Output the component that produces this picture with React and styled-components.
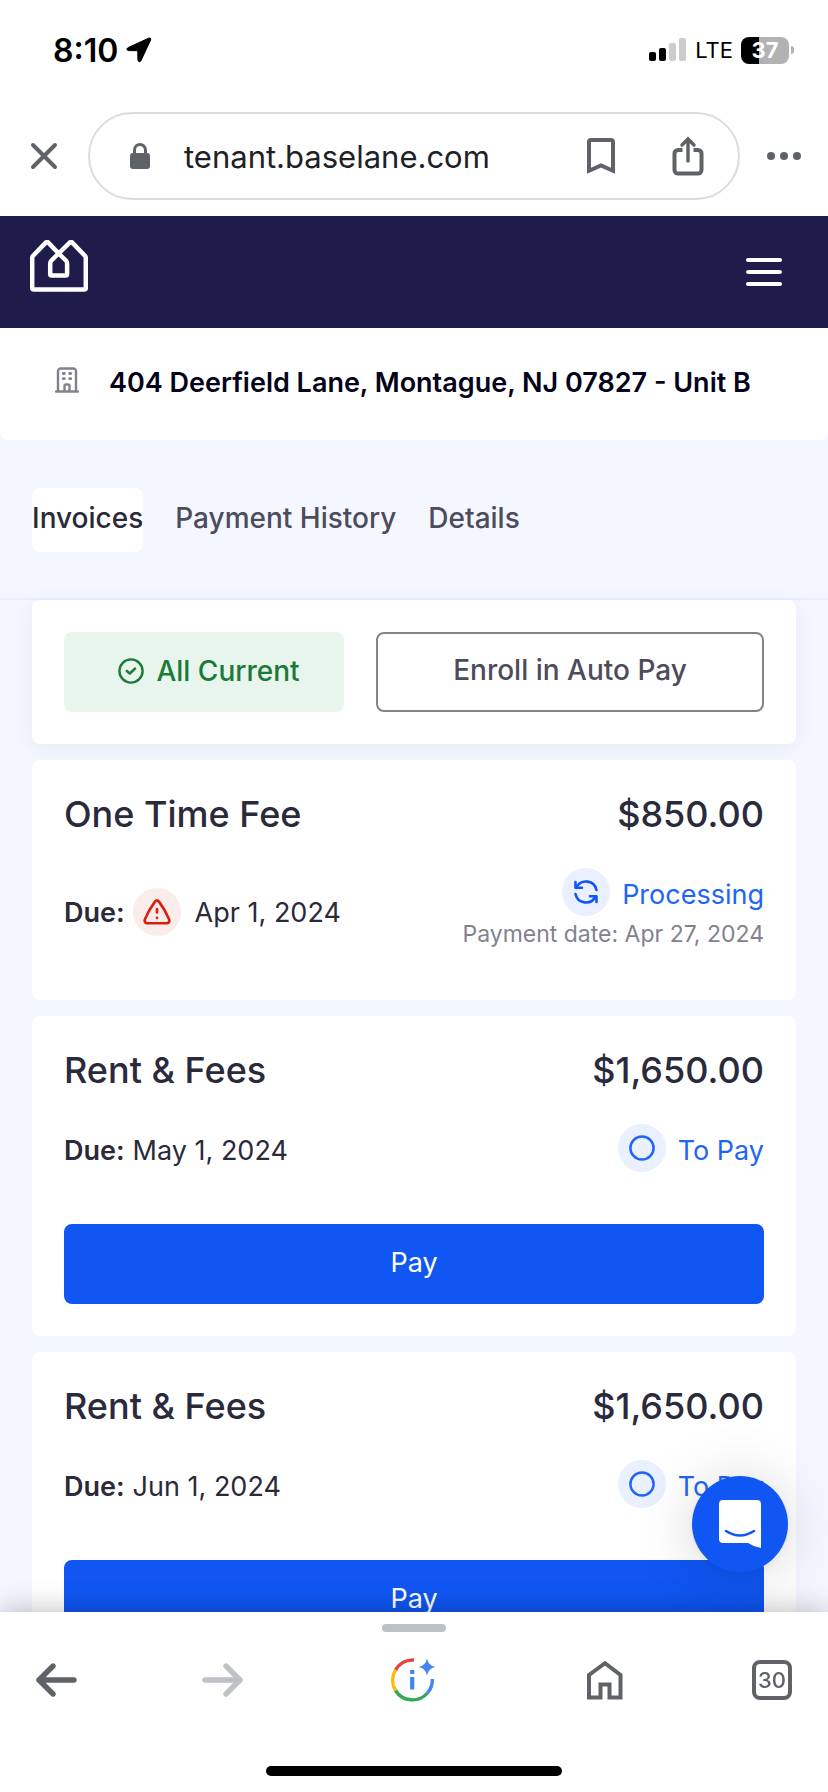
import styled, { createGlobalStyle } from "styled-components";

const invoices = [
    { id: 1, title: "One Time Fee", amount: "$850.00", due: "Apr 1, 2024", late: true, status: "Processing", paymentDate: "Apr 27, 2024" },
    { id: 2, title: "Rent & Fees", amount: "$1,650.00", due: "May 1, 2024", status: "To Pay" },
    { id: 3, title: "Rent & Fees", amount: "$1,650.00", due: "Jun 1, 2024", status: "To Pay" },
];

const tabs = ["Invoices", "Payment History", "Details"];

export default function App() {
    return (
        <>
            <GlobalStyle />
            <Phone>
                <StatusBar />
                <AddressBar />
                <Viewport>
                    <Page>
                        <SiteHeader>
                            <a href="#home" aria-label="Baselane home"><LogoIcon /></a>
                            <IconButton aria-label="Open menu"><MenuIcon /></IconButton>
                        </SiteHeader>
                        <Property>
                            <BuildingIcon />
                            <h1>404 Deerfield Lane, Montague, NJ 07827 - Unit B</h1>
                        </Property>
                        <Tabs>
                            {tabs.map((t) => <Tab key={t} $active={t === "Invoices"}>{t}</Tab>)}
                        </Tabs>
                        <Cards>
                            <Summary>
                                <Current><CheckIcon />All Current</Current>
                                <Enroll>Enroll in Auto Pay</Enroll>
                            </Summary>
                            {invoices.map((i) => <Invoice key={i.id} {...i} />)}
                        </Cards>
                    </Page>
                    <Chat aria-label="Open chat"><ChatIcon /></Chat>
                </Viewport>
                <BottomBar />
            </Phone>
        </>
    )
}

function StatusBar() {
    return (
        <Status>
            <Clock>8:10 <LocationIcon /></Clock>
            <Signal>
                <BarsIcon />
                LTE
                <Battery>
                    <Level>37</Level>
                    <Nub />
                </Battery>
            </Signal>
        </Status>
    )
}

function AddressBar() {
    return (
        <Toolbar>
            <SideButton aria-label="Close"><CloseIcon /></SideButton>
            <Pill>
                <LockIcon />
                <Url type="text" aria-label="Address" defaultValue="tenant.baselane.com" />
                <IconButton aria-label="Bookmark"><BookmarkIcon /></IconButton>
                <IconButton aria-label="Share"><ShareIcon /></IconButton>
            </Pill>
            <SideButton aria-label="More"><DotsIcon /></SideButton>
        </Toolbar>
    )
}

function Invoice({ title, amount, due, late, status, paymentDate }) {
    return (
        <Card>
            <CardTop>
                <h2>{title}</h2>
                <strong>{amount}</strong>
            </CardTop>
            <CardBody>
                <Info>
                    <Due>
                        <b>Due:</b>
                        {late && <Round color="#fbecec"><WarningIcon /></Round>}
                        <DueDate $late={late}>{due}</DueDate>
                    </Due>
                    <State>
                        <StateRow>
                            <Round color="#eaf0ff">{status === "Processing" ? <SyncIcon /> : <CircleIcon />}</Round>
                            <span>{status}</span>
                        </StateRow>
                        {paymentDate && <small>Payment date: {paymentDate}</small>}
                    </State>
                </Info>
            </CardBody>
            {status === "To Pay" && <Pay>Pay</Pay>}
        </Card>
    )
}

function BottomBar() {
    return (
        <Bottom>
            <Handle />
            <Nav>
                <NavButton aria-label="Back"><ArrowIcon color="#5f6368" /></NavButton>
                <NavButton aria-label="Forward" disabled><ArrowIcon color="#bdc1c6" flip /></NavButton>
                <NavButton aria-label="Page info" $wide><PageInfoIcon /></NavButton>
                <NavButton aria-label="Home"><HomeIcon /></NavButton>
                <NavButton aria-label="Open tabs"><TabCount>30</TabCount></NavButton>
            </Nav>
            <HomeIndicator />
        </Bottom>
    )
}

const LocationIcon = () => (
    <svg width="26" height="26" viewBox="0 0 26 26">
        <path d="M22.6 1.2 L2.2 10.6 C.3 11.5 .8 13.6 2.8 13.6 L11.8 13.7 L11.9 22.8 C11.9 25 14.2 25.4 15.1 23.4 L24.6 3 C25.3 1.5 24 .5 22.6 1.2Z" fill="#000" stroke="#000" strokeWidth="1" />
    </svg>
)

const BarsIcon = () => (
    <svg width="38" height="24" viewBox="0 0 38 24">
        <rect x="0" y="14" width="7" height="9" rx="2" />
        <rect x="10" y="10" width="7" height="13" rx="2" />
        <rect x="20" y="5" width="7" height="18" rx="2" fill="#ccc" />
        <rect x="30" y="0" width="7" height="23" rx="2" fill="#ccc" />
    </svg>
)

const CloseIcon = () => (
    <svg width="28" height="28" viewBox="0 0 28 28" stroke="#5f6368" strokeWidth="4" strokeLinecap="round">
        <path d="M3 3 L25 25 M25 3 L3 25" />
    </svg>
)

const LockIcon = () => (
    <svg width="20" height="26" viewBox="0 0 20 26">
        <rect y="10" width="20" height="16" rx="3" fill="#5f6368" />
        <path d="M4.5 12 V7 a5.5 5.5 0 0 1 11 0 V12" fill="none" stroke="#5f6368" strokeWidth="3" />
    </svg>
)

const BookmarkIcon = () => (
    <svg width="28" height="38" viewBox="0 0 28 38" fill="none" stroke="#5f6368" strokeWidth="4">
        <path d="M2 33.8 V5 a2 2 0 0 1 2-2 H24 a2 2 0 0 1 2 2 V33.8 L14 28.5Z" />
    </svg>
)

const ShareIcon = () => (
    <svg width="32" height="40" viewBox="0 0 32 40" fill="none" stroke="#5f6368" strokeWidth="4">
        <path d="M10.5 14 H6 a3.5 3.5 0 0 0-3.5 3.5 V34 A3.5 3.5 0 0 0 6 37.5 H26 A3.5 3.5 0 0 0 29.5 34 V17.5 A3.5 3.5 0 0 0 26 14 H21.5" />
        <path d="M16 25 V4 M10 9 L16 3 L22 9" strokeWidth="3.5" strokeLinecap="round" />
    </svg>
)

const DotsIcon = () => (
    <svg width="34" height="8" viewBox="0 0 34 8" fill="#5f6368">
        <circle cx="4" cy="4" r="4" />
        <circle cx="17" cy="4" r="4" />
        <circle cx="30" cy="4" r="4" />
    </svg>
)

const LogoIcon = () => (
    <svg width="58" height="52" viewBox="0 0 58 52" fill="none" stroke="#fff" strokeWidth="4.5" strokeLinejoin="round">
        <path d="M28.7 13.5 L18.3 2.6 Q17 1.5 15.7 2.6 L3.6 15.2 Q2.2 16.5 2.2 18 V48 Q2.2 49.6 3.8 49.6 H54.2 Q55.8 49.6 55.8 48 V18 Q55.8 16.5 54.4 15.2 L42.3 2.6 Q41 1.5 39.7 2.6 L21.4 20.5 Q20.2 21.7 20.2 23.5 V34 Q20.2 35.6 21.8 35.6 H35.5 Q37.1 35.6 37.1 34 V23.5 Q37.1 21.7 35.9 20.5 L28.7 13.5" />
    </svg>
)

const MenuIcon = () => (
    <svg width="36" height="28" viewBox="0 0 36 28" stroke="#fff" strokeWidth="4" strokeLinecap="round">
        <path d="M2 2 H34 M2 14 H34 M2 26 H34" />
    </svg>
)

const BuildingIcon = () => (
    <svg width="24" height="30" viewBox="0 0 24 30" fill="none" stroke="#82828c" strokeWidth="2.4" strokeLinecap="round">
        <path d="M1 24.5 H23 M3 24 V4 a2.5 2.5 0 0 1 2.5-2.5 H18.5 A2.5 2.5 0 0 1 21 4 V24 M9.5 24 V19 a1.5 1.5 0 0 1 1.5-1.5 H13 a1.5 1.5 0 0 1 1.5 1.5 V24" />
        <path d="M8.3 6.5 H9.3 M14.7 6.5 H15.7 M8.3 11.7 H9.3 M14.7 11.7 H15.7" strokeWidth="2.8" />
    </svg>
)

const CheckIcon = () => (
    <svg width="26" height="26" viewBox="0 0 26 26" fill="none" stroke="#1a7a3a" strokeWidth="2.4" strokeLinecap="round" strokeLinejoin="round">
        <circle cx="13" cy="13" r="11.6" />
        <path d="M8.8 13 L11.8 15.5 L17 10.6" strokeWidth="2.6" />
    </svg>
)

const WarningIcon = () => (
    <svg width="28" height="26" viewBox="0 0 28 26" fill="none" stroke="#d91f0b" strokeWidth="2.6" strokeLinecap="round" strokeLinejoin="round">
        <path d="M12 2.6 Q14 .2 16 2.6 Q22 10.5 26.2 20.5 Q27 23.6 24 24.2 H4 Q1 23.6 1.8 20.5 Q6 10.5 12 2.6Z" />
        <path d="M14 10 V13.5 M14 18.8 V19" />
    </svg>
)

const SyncIcon = () => (
    <svg width="24" height="24" viewBox="0 0 24 24" fill="none" stroke="#0f56f3" strokeWidth="2.6" strokeLinecap="round" strokeLinejoin="round">
        <path d="M22.5 10 A10.7 10.7 0 0 0 2.7 7 M1.5 14 A10.7 10.7 0 0 0 21.3 17" />
        <path d="M1.5 2 V7.8 H8 M22.5 22 V16.2 H16" />
    </svg>
)

const CircleIcon = () => (
    <svg width="26" height="26" viewBox="0 0 26 26" fill="none" stroke="#2065f8" strokeWidth="2.5">
        <circle cx="13" cy="13" r="11.6" />
    </svg>
)

const ChatIcon = () => (
    <svg width="42" height="48" viewBox="0 0 42 48">
        <path d="M4 0 H38 a4 4 0 0 1 4 4 V48 Q35 47 29 43 H4 a4 4 0 0 1-4-4 V4 a4 4 0 0 1 4-4Z" fill="#fff" />
        <path d="M7 31 Q21 40 35 31" fill="none" stroke="#0f56f3" strokeWidth="2.6" strokeLinecap="round" />
    </svg>
)

const ArrowIcon = ({ color, flip }) => (
    <svg width="42" height="34" viewBox="0 0 42 34" fill="none" stroke={color} strokeWidth="5.4" strokeLinecap="round" strokeLinejoin="round">
        <path d={flip ? "M3 17 H38 M24 3 L38 17 L24 31" : "M39 17 H4 M18 3 L4 17 L18 31"} />
    </svg>
)

const PageInfoIcon = () => (
    <svg width="50" height="44" viewBox="0 0 50 44" fill="none" strokeWidth="3.4">
        <path d="M25 2 A20 20 0 0 0 6.5 11.8" stroke="#ea4335" />
        <path d="M6.5 11.8 A20 20 0 0 0 6.5 32.5" stroke="#fbbc04" />
        <path d="M6.5 32.5 A20 20 0 0 0 38.5 35" stroke="#34a853" />
        <path d="M38.5 35 A20 20 0 0 0 43.3 21" stroke="#4285f4" />
        <path d="M38 .5 Q39.3 7.7 46.5 9 Q39.3 10.3 38 17.5 Q36.7 10.3 29.5 9 Q36.7 7.7 38 .5Z" fill="#4285f4" />
        <path d="M23.2 12 V16 M23.2 19 V31.5" stroke="#4285f4" strokeWidth="4.2" />
    </svg>
)

const HomeIcon = () => (
    <svg width="36" height="40" viewBox="0 0 36 40" fill="none" stroke="#5f6368" strokeWidth="4">
        <path d="M2 37.5 V15 L18 3.2 L33.5 15 V37.5 H22.5 V24.5 H13.5 V37.5Z" />
    </svg>
)

const GlobalStyle = createGlobalStyle`
* {
    box-sizing: border-box;
    margin: 0;
}

body {
    font-family: Inter, "Liberation Sans", sans-serif;
    font-size: 27px;
    color: #2b2a3b;
    background-color: #fff;
}

button {
    border: none;
    padding: 0;
    background: none;
    font: inherit;
    color: inherit;
}

svg {
    display: block;
    flex-shrink: 0;
}
`

const Phone = styled.div`
    height: 100vh;
    display: flex;
    flex-direction: column;
    overflow: hidden;
`

const Status = styled.div`
    flex-shrink: 0;
    height: 100px;
    padding: 0 34px 0 53px;
    display: flex;
    justify-content: space-between;
    align-items: center;
    color: #000;
`

const Clock = styled.div`
    display: flex;
    align-items: center;
    gap: 8px;
    font-size: 32px;
    font-weight: 600;
`

const Signal = styled.div`
    display: flex;
    align-items: center;
    gap: 8px;
    font-size: 22px;
`

const Battery = styled.div`
    display: flex;
    align-items: center;
    gap: 2px;
`

const Level = styled.span`
    width: 48px;
    border-radius: 8px;
    background: linear-gradient(to right, #000 37%, #b2b2b2 37%);
    color: #fff;
    font-weight: 700;
    line-height: 27px;
    text-align: center;
`

const Nub = styled.span`
    width: 3px;
    height: 8px;
    border-radius: 0 4px 4px 0;
    background-color: #b2b2b2;
`

const Toolbar = styled.div`
    flex-shrink: 0;
    padding: 12px 0 16px;
    display: flex;
`

const SideButton = styled.button`
    flex-shrink: 0;
    width: 88px;
    display: flex;
    justify-content: center;
    align-items: center;
`

const Pill = styled.div`
    flex: 1;
    min-width: 0;
    height: 88px;
    padding: 0 34px 0 40px;
    display: flex;
    align-items: center;
    border: 2px solid #dadce0;
    border-radius: 44px;
`

const Url = styled.input`
    flex: 1;
    min-width: 0;
    padding: 0;
    margin-left: 34px;
    border: none;
    outline: none;
    background: none;
    font-family: inherit;
    font-size: 31px;
    color: #202124;
`

const IconButton = styled.button`
    display: flex;

& + & {
    margin-left: 57px;
}
`

const Viewport = styled.main`
    flex: 1;
    min-height: 0;
    position: relative;
`

const Page = styled.div`
    height: 100%;
    overflow-y: auto;
    scrollbar-width: none;
    background-color: #f4f7ff;
`

const SiteHeader = styled.header`
    height: 112px;
    padding: 0 46px 0 30px;
    display: flex;
    justify-content: space-between;
    align-items: center;
    background-color: #1e1c4b;

a {
    padding-bottom: 12px;
}
`

const Property = styled.div`
    height: 112px;
    padding: 0 55px 4px;
    display: flex;
    align-items: center;
    gap: 30px;
    background-color: #fff;
    border-radius: 0 0 8px 8px;

h1 {
    font-size: 27px;
    font-weight: 600;
    color: #04031a;
    white-space: nowrap;
}
`

const Tabs = styled.nav`
    height: 160px;
    padding: 48px 32px 0;
    display: flex;
    align-items: flex-start;
    gap: 32px;
    border-bottom: 2px solid #e7eeff;
`

const Tab = styled.button`
    height: 64px;
    padding-bottom: 4px;
    border-radius: 8px;
    background-color: ${props => props.$active ? "#fff" : "transparent"};
    color: ${props => props.$active ? "#2b2a3b" : "#4d4c5c"};
    font-size: 28px;
    font-weight: 500;
`

const Cards = styled.div`
    padding: 0 32px 16px;
    display: flex;
    flex-direction: column;
    gap: 16px;
`

const Summary = styled.section`
    padding: 32px;
    display: flex;
    gap: 32px;
    background-color: #fff;
    border-radius: 8px;
    box-shadow: 0 4px 24px rgba(30, 28, 75, 0.06);
    font-size: 28px;
    font-weight: 500;
`

const Current = styled.div`
    width: 280px;
    height: 80px;
    display: flex;
    justify-content: center;
    align-items: center;
    gap: 12px;
    padding: 0 0 2px 10px;
    border-radius: 8px;
    background-color: #e8f5ec;
    color: #1a7a3a;
`

const Enroll = styled.button`
    flex: 1;
    padding-bottom: 4px;
    border: 2px solid #82828c;
    border-radius: 8px;
    color: #4d4c5c;
`

const Card = styled.section`
    padding: 32px;
    background-color: #fff;
    border-radius: 8px;
`

const CardTop = styled.div`
    display: flex;
    justify-content: space-between;
    line-height: 44px;

h2, strong {
    font-size: 36px;
    font-weight: 500;
}
`

const CardBody = styled.div`
    min-height: 100px;
    margin-top: 32px;
`

const Info = styled.div`
    display: flex;
    justify-content: space-between;
    align-items: center;
`

const Due = styled.div`
    display: flex;
    align-items: center;
    gap: 8px;

b {
    font-weight: 600;
}
`

const DueDate = styled.span`
    margin-left: ${props => props.$late ? "6px" : "0"};
`

const State = styled.div`
    padding-bottom: 4px;
    display: flex;
    flex-direction: column;
    align-items: flex-end;

small {
    font-size: 23px;
    line-height: 36px;
    color: #82828c;
}
`

const StateRow = styled.div`
    display: flex;
    align-items: center;
    gap: 12px;
    color: #2065f8;

> span:last-child {
    padding-top: 4px;
}
`

const Round = styled.span`
    width: 48px;
    height: 48px;
    display: flex;
    justify-content: center;
    align-items: center;
    border-radius: 50%;
    background-color: ${props => props.color};
`

const Pay = styled.button`
    width: 100%;
    height: 80px;
    padding-bottom: 4px;
    border-radius: 8px;
    background-color: #0f56f3;
    color: #fff;
`

const Chat = styled.button`
    position: absolute;
    right: 40px;
    bottom: 40px;
    width: 96px;
    height: 96px;
    display: flex;
    justify-content: center;
    align-items: center;
    border-radius: 50%;
    background-color: #0f56f3;
    box-shadow: 0 2px 12px rgba(0, 0, 0, 0.06), 0 4px 64px rgba(0, 0, 0, 0.16);
`

const Bottom = styled.footer`
    flex-shrink: 0;
    position: relative;
    padding: 12px 0 16px;
    display: flex;
    flex-direction: column;
    align-items: center;
    background-color: #fff;
    box-shadow: 0 0 28px rgba(0, 0, 0, 0.28);
`

const Handle = styled.div`
    width: 64px;
    height: 8px;
    border-radius: 4px;
    background-color: #bdc1c6;
`

const Nav = styled.nav`
    align-self: stretch;
    padding: 24px 32px 62px;
    display: flex;
    justify-content: space-between;
`

const NavButton = styled.button`
    width: ${props => props.$wide ? "96px" : "48px"};
    height: 48px;
    display: flex;
    justify-content: center;
    align-items: center;
`

const TabCount = styled.span`
    width: 40px;
    border: 4px solid #5f6368;
    border-radius: 8px;
    font-size: 22px;
    font-weight: 500;
    line-height: 32px;
    color: #5f6368;
`

const HomeIndicator = styled.div`
    width: 296px;
    height: 10px;
    border-radius: 5px;
    background-color: #000;
`
